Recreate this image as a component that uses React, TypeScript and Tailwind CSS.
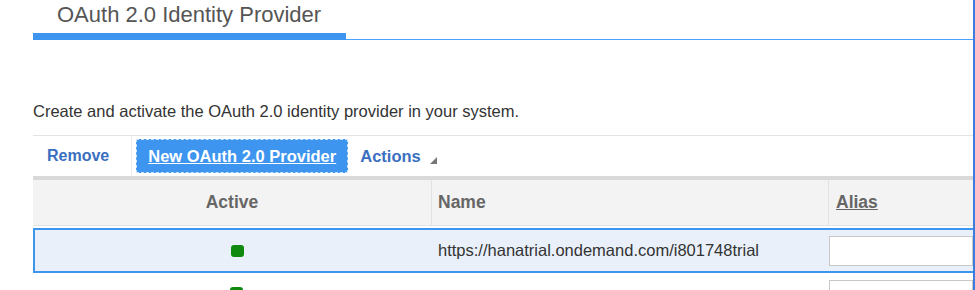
export default function App() {
  return (
    <div
      className="w-[975px] h-[290px] overflow-hidden bg-white border-r-2 border-[#3b7ddd] text-[#333]"
      style={{ fontFamily: '"Liberation Sans", Arial, sans-serif' }}
    >
      {/* tab header */}
      <div className="pl-[33px]">
        <div className="h-[33px] pl-[24px] pt-[2px] text-[22px] leading-[26px] text-[#555]">
          OAuth 2.0 Identity Provider
        </div>
        <div className="flex items-end">
          <div className="w-[313px] h-[7px] bg-[#3d95f0]" />
          <div className="flex-1 h-[1px] bg-[#4da0ff]" />
        </div>
      </div>

      <div className="pl-[33px] pt-[61px]">
        <p className="text-[16.5px] leading-[20px] text-[#333]">
          Create and activate the OAuth 2.0 identity provider in your system.
        </p>

        {/* toolbar */}
        <div className="mt-[14px] border-t border-[#e3e3e3] h-[41px] flex items-center">
          <button className="h-full pl-[14px] pr-[22px] text-[16px] font-bold text-[#3a6fbf]">Remove</button>
          <div className="w-[1px] h-full bg-[#ececec]" />
          <button className="ml-[4px] h-[34px] px-[11px] bg-[#3d95f0] border border-dashed border-[#cfe5fb] text-[16.5px] font-bold text-white underline">
            New OAuth 2.0 Provider
          </button>
          <button className="h-full pl-[12px] flex items-center text-[16.5px] font-bold text-[#3a6fbf]">
            Actions
            <svg width="7" height="7" viewBox="0 0 7 7" className="ml-[9px] mt-[8px]">
              <path d="M7 0 L7 7 L0 7 Z" fill="#777" />
            </svg>
          </button>
        </div>

        {/* table */}
        <div className="border-t-4 border-[#d9d9d9]">
          <div className="flex h-[46px] bg-[#f3f3f3] border-b border-[#e4e4e4] text-[17.5px] font-bold text-[#666]">
            <div className="w-[399px] flex items-center justify-center border-r border-[#e2e2e2]">Active</div>
            <div className="w-[397px] flex items-center pl-[6px] border-r border-[#e2e2e2]">Name</div>
            <div className="flex-1 flex items-center pl-[7px] underline">Alias</div>
          </div>
          <div className="flex h-[45px] mt-[2px] bg-[#e9f0f9] border-2 border-r-0 border-[#3d95f0] text-[16.5px] text-[#333]">
            <div className="w-[397px] flex items-center justify-center">
              <div className="w-[13px] h-[12px] rounded-[3px] bg-[#0f8a0f] ml-[8px]" />
            </div>
            <div className="w-[397px] flex items-center pl-[6px]">
              https://hanatrial.ondemand.com/i801748trial
            </div>
            <div className="flex-1 flex items-center">
              <div className="w-full h-[30px] bg-white border border-[#c8c8c8]" />
            </div>
          </div>
          <div className="flex h-[45px] text-[16.5px] text-[#333]">
            <div className="w-[399px] flex items-start justify-center pt-[14px]">
              <div className="w-[13px] h-[12px] rounded-[3px] bg-[#0f8a0f] ml-[8px]" />
            </div>
            <div className="w-[397px] flex items-start pl-[6px] pt-[13px]">Alert &amp; Code</div>
            <div className="flex-1 pt-[7px]">
              <div className="w-full h-[30px] bg-white border border-[#c8c8c8]" />
            </div>
          </div>
        </div>
      </div>
    </div>
  );
}
